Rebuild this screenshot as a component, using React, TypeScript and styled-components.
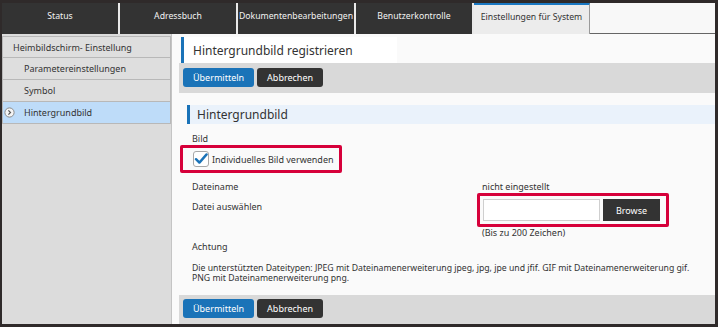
import React from "react";
import styled, { createGlobalStyle } from "styled-components";

const Global = createGlobalStyle`
  html, body { margin: 0; padding: 0; background: #fff; }
  body { font-family: "Noto Sans", "Open Sans", sans-serif; color: #333; }
  * { box-sizing: border-box; }
`;

const Frame = styled.div`
  width: 718px;
  height: 327px;
  border-style: solid;
  border-color: #2f2a2a;
  border-width: 3px 3px 3px 2px;
  display: flex;
  flex-direction: column;
  background: #fafafa;
  overflow: hidden;
`;

const TabBar = styled.div`
  display: flex;
  gap: 2px;
  height: 31px;
  background: #e9e9e9;
  flex-shrink: 0;
`;

const Tab = styled.div<{ $active?: boolean }>`
  width: 116px;
  height: 31px;
  display: flex;
  align-items: center;
  justify-content: center;
  padding-bottom: 5px;
  font-size: 8.7px;
  white-space: nowrap;
  background: ${(p) => (p.$active ? "#ececec" : "#333333")};
  color: ${(p) => (p.$active ? "#333" : "#f2f2f2")};
  border-top: ${(p) => (p.$active ? "2px solid #1a78c2" : "none")};
  border-right: ${(p) => (p.$active ? "1px solid #9a9a9a" : "none")};
`;

const TabFill = styled.div`
  flex: 1;
  margin-left: -2px;
  background: #f8f8f8;
  border-bottom: 1px solid #666;
`;

const Body = styled.div`
  flex: 1;
  display: flex;
  min-height: 0;
`;

const Sidebar = styled.nav`
  width: 170px;
  flex-shrink: 0;
  background: #dcdcdc;
  border-right: 1px solid #c4c4c4;
  padding-top: 2px;
`;

const NavItem = styled.div<{ $indent?: boolean; $active?: boolean }>`
  position: relative;
  height: 22px;
  display: flex;
  align-items: center;
  padding-left: ${(p) => (p.$indent ? "21px" : "10px")};
  font-size: 9px;
  color: #333;
  background: ${(p) => (p.$active ? "#bedcf9" : "#dedede")};
  border: 1px solid #b8b8b8;
  border-top: none;
  &:first-child { border-top: 1px solid #b8b8b8; }
`;

const NavIcon = styled.svg`
  position: absolute;
  left: 1px;
  top: 5px;
`;

const Main = styled.main`
  flex: 1;
  display: flex;
  flex-direction: column;
  padding-left: 7px;
  min-width: 0;
`;

const PageTitle = styled.h1`
  margin: 3px 0 0 2px;
  width: 216px;
  height: 26px;
  border-left: 3px solid #1a73b8;
  background: #fff;
  padding-left: 9px;
  display: flex;
  align-items: center;
  font-size: 12px;
  font-weight: 400;
  color: #333;
`;

const ButtonBar = styled.div<{ $bottom?: boolean }>`
  display: flex;
  gap: 3px;
  height: ${(p) => (p.$bottom ? "29px" : "30px")};
  padding: ${(p) => (p.$bottom ? "4px" : "5px")} 4px 0;
  background: #d9d9d9;
  margin-top: ${(p) => (p.$bottom ? "auto" : "0")};
  flex-shrink: 0;
`;

const Button = styled.button<{ $primary?: boolean }>`
  height: 19px;
  padding: 0 10px;
  border: none;
  border-radius: 3px;
  font-family: "Noto Sans", sans-serif;
  font-size: 9px;
  color: #fff;
  background: ${(p) => (p.$primary ? "#1a73b8" : "#333")};
`;

const SectionHeader = styled.h2`
  margin: 12px 0 0 8px;
  height: 19px;
  border-left: 3px solid #1a73b8;
  background: #eaf2fb;
  padding-left: 7px;
  display: flex;
  align-items: center;
  font-size: 12px;
  font-weight: 400;
  color: #333;
`;

const Form = styled.div`
  padding-left: 1px;
  display: flex;
  flex-direction: column;
  font-size: 9px;
  color: #333;
`;

const Label = styled.div<{ $top?: number }>`
  padding-left: 12px;
  line-height: 12px;
  margin-top: ${(p) => p.$top ?? 0}px;
`;

const Highlight = styled.div`
  border: 3px solid #d6003a;
  border-radius: 2px;
`;

const CheckFrame = styled(Highlight)`
  align-self: flex-start;
  height: 28px;
  display: flex;
  align-items: center;
  gap: 3px;
  padding: 0 5px 0 10px;
`;

const CheckBox = styled.span`
  width: 16px;
  height: 16px;
  border: 1px solid #a8a8a8;
  border-radius: 3px;
  background: #fff;
  display: flex;
  align-items: center;
  justify-content: center;
`;

const Row = styled.div<{ $top?: number }>`
  display: grid;
  grid-template-columns: 297px 1fr;
  margin-top: ${(p) => p.$top ?? 0}px;
`;

const Value = styled.div`
  padding-left: 5px;
  line-height: 12px;
`;

const FileFrame = styled(Highlight)`
  justify-self: start;
  display: flex;
  gap: 3px;
  padding: 3px 6px 3px 3px;
`;

const FileInput = styled.input`
  width: 117px;
  height: 22px;
  border: 1px solid #cfcfcf;
  background: #fff;
  margin: 0;
`;

const Browse = styled.button`
  width: 57px;
  height: 22px;
  border: none;
  background: #333;
  color: #fff;
  font-family: "Noto Sans", sans-serif;
  font-size: 9px;
  padding: 0;
`;

const Note = styled.p`
  margin: 10px 0 0;
  padding-left: 12px;
  max-width: 515px;
  line-height: 10px;
  font-size: 8.7px;
`;

export default function App() {
  return (
    <>
      <Global />
      <Frame>
        <TabBar>
          <Tab>Status</Tab>
          <Tab>Adressbuch</Tab>
          <Tab>Dokumentenbearbeitungen</Tab>
          <Tab>Benutzerkontrolle</Tab>
          <Tab $active>Einstellungen für System</Tab>
          <TabFill />
        </TabBar>
        <Body>
          <Sidebar>
            <NavItem>Heimbildschirm- Einstellung</NavItem>
            <NavItem $indent>Parametereinstellungen</NavItem>
            <NavItem $indent>Symbol</NavItem>
            <NavItem $indent $active>
              <NavIcon width="11" height="11" viewBox="0 0 11 11">
                <circle cx="5.5" cy="5.5" r="4.6" fill="#f4f4f4" stroke="#8a8a8a" strokeWidth="1" />
                <path d="M4.4 3.4 L6.5 5.5 L4.4 7.6" fill="none" stroke="#555" strokeWidth="1.2" />
              </NavIcon>
              Hintergrundbild
            </NavItem>
          </Sidebar>
          <Main>
            <PageTitle>Hintergrundbild registrieren</PageTitle>
            <ButtonBar>
              <Button $primary>Übermitteln</Button>
              <Button>Abbrechen</Button>
            </ButtonBar>
            <SectionHeader>Hintergrundbild</SectionHeader>
            <Form>
              <Label $top={9}>Bild</Label>
              <CheckFrame>
                <CheckBox>
                  <svg width="14" height="14" viewBox="0 0 14 14">
                    <path d="M2 7.2 L5.4 10.6 L12.6 2.4" fill="none" stroke="#1a73b8" strokeWidth="2.4" strokeLinecap="round" strokeLinejoin="round" />
                  </svg>
                </CheckBox>
                <span>Individuelles Bild verwenden</span>
              </CheckFrame>
              <Row $top={8}>
                <Label>Dateiname</Label>
                <Value>nicht eingestellt</Value>
              </Row>
              <Row>
                <Label $top={8}>Datei auswählen</Label>
                <FileFrame>
                  <FileInput type="text" />
                  <Browse>Browse</Browse>
                </FileFrame>
              </Row>
              <Row>
                <span />
                <Value>(Bis zu 200 Zeichen)</Value>
              </Row>
              <Label $top={2}>Achtung</Label>
              <Note>
                Die unterstützten Dateitypen: JPEG mit Dateinamenerweiterung jpeg, jpg, jpe und jfif. GIF mit Dateinamenerweiterung gif. PNG mit Dateinamenerweiterung png.
              </Note>
            </Form>
            <ButtonBar $bottom>
              <Button $primary>Übermitteln</Button>
              <Button>Abbrechen</Button>
            </ButtonBar>
          </Main>
        </Body>
      </Frame>
    </>
  );
}
